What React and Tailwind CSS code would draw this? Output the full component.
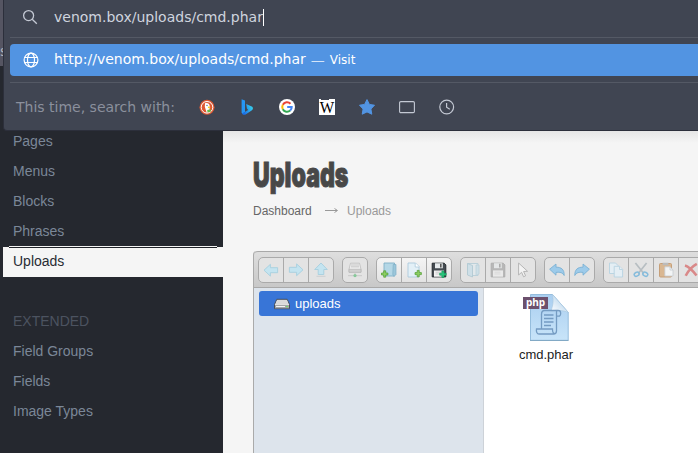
const navItems = ["Pages", "Menus", "Blocks", "Phrases"];
const extendedItems = ["Field Groups", "Fields", "Image Types"];

const Svg = ({ children, className = "h-4 w-4", box = "0 0 16 16" }) => (
  <svg viewBox={box} className={`${className} shrink-0`} fill="none">{children}</svg>
);

/* Address bar icons */
const SearchIcon = () => (
  <Svg><g stroke="#c4c9d4" strokeWidth="1.3"><circle cx="6.6" cy="6.6" r="5" /><path d="M10.2 10.2 14.8 14.8" /></g></Svg>
);
const GlobeIcon = () => (
  <Svg><g stroke="#fff" strokeWidth="1.2"><circle cx="8" cy="8" r="6.9" /><ellipse cx="8" cy="8" rx="3.5" ry="6.9" /><path d="M1.5 5.5h13M1.5 10.5h13" /></g></Svg>
);
const DuckIcon = () => (
  <Svg>
    <circle cx="8" cy="8.3" r="7.5" fill="#de5833" /><circle cx="8" cy="8.3" r="5.8" stroke="#fff" strokeWidth="1" />
    <path d="M6 4.2c3-.7 5 .8 4.7 3.4l-.3 5.2-2.7 1-1.9-6Z" fill="#fff" />
    <path d="M8.6 7.6 12 8l-2.7 1.2Z" fill="#fdd20a" /><path d="m8.2 11 3.6-.7-.3 2.6-3 .3Z" fill="#65bc46" />
    <circle cx="8" cy="6.4" r=".6" fill="#2d4f8e" />
  </Svg>
);
const BingIcon = () => (
  <Svg>
    <defs><linearGradient id="bing" x1="4" y1="12" x2="14" y2="8" gradientUnits="userSpaceOnUse"><stop stopColor="#1b6de8" /><stop offset="1" stopColor="#38d6ee" /></linearGradient></defs>
    <path d="M2.6.2 6 1.6v10.7L3.8 15l-1.2-1.2Z" fill="#2696f4" />
    <path d="m7.2 5 5.5 2.4c1.7.8 1.5 3.2-.1 4.2l-6 3.8c-1.4.7-3.2.2-3.6-1l6.1-3.4-1.2-1.5Z" fill="url(#bing)" />
  </Svg>
);
const GoogleIcon = () => (
  <Svg>
    <circle cx="8" cy="8" r="8" fill="#fff" />
    <g strokeWidth="2"><path d="M11.5 4.7A4.8 4.8 0 0 0 3.8 5.8" stroke="#ea4335" /><path d="M3.8 5.8a4.8 4.8 0 0 0 0 4.4" stroke="#fbbc05" /><path d="M3.8 10.2a4.8 4.8 0 0 0 7.4 1.4" stroke="#34a853" /><path d="M11.2 11.6A4.6 4.6 0 0 0 12.7 8.1H8.2" stroke="#4285f4" /></g>
  </Svg>
);
const WikiIcon = () => (
  <span className="relative flex h-4 w-4 items-center justify-center bg-white font-['Liberation_Serif',serif] text-[17px] leading-none text-black">
    <span className="scale-x-90">W</span><span className="absolute left-0.5 top-0 h-px w-2 bg-[#404552]" />
  </span>
);
const StarIcon = () => (
  <Svg><path d="m8 .6 2.4 4.8 5.1.8-3.6 3.8.9 5.2L8 12.9l-4.8 2.3.9-5.2L.5 6.2l5.1-.8Z" fill="#5294e2" stroke="#5294e2" strokeWidth="1" strokeLinejoin="round" /></Svg>
);
const TabIcon = () => (
  <Svg><rect x=".6" y="2.6" width="14.8" height="11" rx="1.2" stroke="#c4c9d4" strokeWidth="1.1" /></Svg>
);
const ClockIcon = () => (
  <Svg><circle cx="7.7" cy="8" r="6.9" stroke="#c4c9d4" strokeWidth="1.2" /><path d="M7.6 4v4.2l3.2 2" stroke="#c4c9d4" strokeWidth="1.2" /></Svg>
);

/* File manager toolbar icons */
const arrowPath = "M1 8.2 7.4 2.3v3.4H14.6v5H7.4v3.4Z";
const Arrow = ({ turn = "" }) => (
  <Svg className={`h-4 w-4 ${turn}`}><path d={arrowPath} fill="#c4e4f0" stroke="#a6cfdf" strokeWidth=".9" /></Svg>
);
const UpArrow = () => (
  <Svg><path d="M8 1 14.3 7.5H10.8v5H5.2v-5H1.7Z" fill="#c4e4f0" stroke="#a6cfdf" strokeWidth=".9" /><path d="M3.5 14.3h9" stroke="#cbcfd1" /></Svg>
);
const Plus = ({ x, y, color = "#8dcf62", edge = "#4f9c31" }) => (
  <path transform={`translate(${x} ${y})`} d="M2.2 0h2v2.2h2.2v2H4.2v2.2h-2V4.2H0v-2h2.2Z" fill={color} stroke={edge} strokeWidth=".7" />
);
const DriveNet = () => (
  <Svg><path d="M3.5 1.2h9l1.5 6v3H2v-3Z" fill="#ececec" stroke="#bcbcbc" strokeWidth=".8" /><path d="M2 7.3h12v3H2Z" fill="#d0d0d0" stroke="#b4b4b4" strokeWidth=".6" /><path d="M4 3h8M4 4.8h8M1 13.7h14M8 10.5v3" stroke="#c8c8c8" /><circle cx="8" cy="13.6" r="1.6" fill="#87c89a" /></Svg>
);
const FolderShape = () => (
  <><path d="M3 1h10.5v13H3Z" fill="#b4d7e6" stroke="#7fb0c7" strokeWidth=".9" /><path d="M12.2 2.5H15v10l-2 2-1.2-2Z" fill="#9bc6da" stroke="#7fb0c7" strokeWidth=".7" /></>
);
const NewFolder = () => <Svg><FolderShape /><Plus x={0.5} y={8.8} /></Svg>;
const NewFile = () => (
  <Svg><path d="M2 1h7.5L13 4.5V15H2Z" fill="#e3f0f7" stroke="#accadc" strokeWidth=".9" /><path d="M9.2 1v4h4" fill="#fff" stroke="#accadc" strokeWidth=".8" /><Plus x={9} y={8.4} /></Svg>
);
const Floppy = ({ upload }) => (
  <Svg className={upload ? "h-4 w-4" : "h-4 w-4 opacity-40"}>
    <path d="M1.2 1.2h12l1.6 1.7v12H1.2Z" fill={upload ? "#454b51" : "#777"} stroke={upload ? "#252a2f" : "#606060"} />
    <path d="M4 1.2h7.8v5H4Z" fill="#e7ebed" /><path d="M9 1.8h1.6v3.6H9Z" fill="#555" />
    <path d="M3 8.4h10v6.3H3Z" fill="#f3f3f3" /><path d="M4.5 10.2h6M4.5 12h6" stroke="#bbb" strokeWidth=".7" />
    {upload && <Plus x={8.7} y={9} color="#28c77d" edge="#139858" />}
  </Svg>
);
const OpenFolder = () => (
  <Svg className="h-4 w-4 opacity-50"><path d="M2.5 1.5H13v12H7.5" fill="#e1eef4" stroke="#93bdcf" /><path d="M11 3h3v9l-3 1.5Z" fill="#b9dceb" stroke="#93bdcf" strokeWidth=".8" /><path d="m2.5 1.5 5 2V15l-5-2Z" fill="#b9dceb" stroke="#79a9be" strokeWidth=".8" /></Svg>
);
const Cursor = () => (
  <Svg><path d="M3.6 1v12l3-2.7 2 4.5 2-1-2-4.3 4-.2Z" fill="#f3f3f3" stroke="#b5b5b5" /></Svg>
);
const Bend = ({ turn = "" }) => (
  <Svg className={`h-4 w-4 ${turn}`}><path d="M.6 7.2 7 2v3.2c5.3-.2 8.4 2.3 8.2 8.3-1.6-3-4-3.6-8.2-3.1v2.8Z" fill="#9dcbea" stroke="#75add2" strokeWidth=".8" /></Svg>
);
const Copy = () => (
  <Svg><g fill="#e4eef4" stroke="#b7d3e1" strokeWidth=".9"><path d="M1.5 1h6L10 3.5v8H1.5Z" /><path d="M6.2 4.3h5.4l3 3V15H6.2Z" /><path d="M11.5 4.5v3h3" /></g></Svg>
);
const Cut = () => (
  <Svg><path d="m2.4 1 8.4 10.5M13.6 1 5.2 11.5" stroke="#b7bec2" strokeWidth="1.7" /><g stroke="#86bcdc" strokeWidth="1.5"><ellipse cx="3.7" cy="12.2" rx="2.6" ry="1.9" transform="rotate(-25 3.7 12.2)" /><ellipse cx="12.3" cy="12.2" rx="2.6" ry="1.9" transform="rotate(25 12.3 12.2)" /></g></Svg>
);
const Paste = () => (
  <Svg><rect x="1.5" y="1.5" width="12" height="13.5" rx="1" fill="#d9b792" stroke="#c69f78" /><path d="M4.6.8h5.8v2.4H4.6Z" fill="#bbb" /><path d="M6.8 4.8H12L15 8v6H6.8Z" fill="#f2f4f5" stroke="#c5ccd0" strokeWidth=".8" /><path d="M12 4.8V8h3" stroke="#c5ccd0" strokeWidth=".8" /></Svg>
);
const Remove = () => (
  <Svg><path d="M2 3.5C5 4.4 10 9 13.5 13.5M13.8 1.8C9.5 4.2 5 9 2.7 13.8" stroke="#d98989" strokeWidth="2.6" /></Svg>
);

const groups = [
  [<Arrow />, <Arrow turn="rotate-180" />, <UpArrow />],
  [<DriveNet />],
  [<NewFolder />, <NewFile />, <Floppy upload />],
  [<OpenFolder />, <Floppy />, <Cursor />],
  [<Bend />, <Bend turn="-scale-x-100" />],
  [<Copy />, <Cut />, <Paste />, <Remove />, null],
];
const activeGroup = 2;

function Toolbar() {
  return (
    <div className="flex h-[37px] gap-2 overflow-hidden rounded-tl-sm border-y border-[#a9a9a9] bg-gradient-to-b from-[#dedede] to-[#c8c8c8] pl-1 pt-[5px]">
      {groups.map((group, g) => (
        <div key={g} className={`flex h-[26px] shrink-0 divide-x divide-[#aaa] overflow-hidden rounded-[5px] border border-[#aaa] ${g === activeGroup ? "bg-gradient-to-b from-[#f4f4f4] to-[#e3e3e3]" : "bg-[#e3e3e3]"}`}>
          {group.map((icon, i) => (
            <div key={i} className={`flex h-6 items-center justify-center ${i === group.length - 1 ? "w-6" : "w-[25px]"}`}>{icon}</div>
          ))}
        </div>
      ))}
    </div>
  );
}

const DriveIcon = () => (
  <Svg className="h-3 w-4" box="0 0 16 12">
    <path d="M2.8 1.3h10.4l2.3 5.2v4.2H.5V6.5Z" fill="#e4e4e4" stroke="#3f444d" strokeWidth=".9" /><path d="M3.3 2h9.4l1.7 4.4H1.6Z" fill="#dadada" /><path d="M1 7h14v3.2H1Z" fill="#a3a6a8" /><path d="M2 8.5h9" stroke="#f4f4f4" /><path d="M12 8.6h2" stroke="#72dc65" />
  </Svg>
);

function PhpFile() {
  return (
    <div className="relative h-12 w-12">
      <Svg className="h-12 w-12" box="0 0 48 48">
        <defs><linearGradient id="paper" x2="0" y2="1"><stop stopColor="#a9cef0" /><stop offset="1" stopColor="#c8e4f9" /></linearGradient><linearGradient id="fold" x1="0" y1="1" x2="1" y2="0"><stop stopColor="#fff" /><stop offset="1" stopColor="#a2c8e7" /></linearGradient></defs>
        <path d="M8.5 1.5h22l15.7 17.8V47.3H8.5Z" fill="url(#paper)" stroke="#95bddd" />
        <path d="M8 47.5h38.5" stroke="#82a9c5" /><path d="M30.5 1.5c1.4 7 .3 11.3-1.5 16.8 7-2 12-.6 17.2 1Z" fill="url(#fold)" stroke="#a9c8de" strokeWidth=".6" />
        <g stroke="#749bc2" strokeWidth="1.3"><path d="M19.5 36V21.5c0-3 1-4 3-4h14c2.8 0 3 5.7 0 5.7h-2V38c0 2.5-1 3-3 3H17c-2 0-3-2.5-2.5-5h16c0 2.6.5 4.5 2 4.5M34.5 23V19c0-1.4 1-1.7 2-1.5" /><path d="M22 22h9.5M22 25.5h9.5M22 29h9.5M22 32.5h7" /></g>
      </Svg>
      <span className="absolute left-px top-1 flex h-3 w-[25px] items-center justify-center bg-[#6c506d] pb-0.5 font-['Open_Sans',sans-serif] text-[10px] font-bold leading-none text-white">php</span>
    </div>
  );
}

function Sidebar() {
  return (
    <aside className="flex h-full w-[223px] shrink-0 flex-col bg-[#25282f] pl-[3px] pt-[126px] text-sm text-[#7b8798]">
      {navItems.map((item) => <div key={item} className="flex h-[30px] items-center pl-2.5">{item}</div>)}
      <div className="relative mt-px flex h-[30px] items-center bg-[#f5f5f5] pb-0.5 pl-2.5 text-[#282c33]">
        Uploads
        <span className="absolute -top-px left-1.5 h-0.5 w-52 border-b border-[#1f2228] bg-[#f5f5f5]" />
      </div>
      <div className="mt-[29px] flex h-[30px] items-center pl-2.5 text-[#4c5360]">EXTENDED</div>
      {extendedItems.map((item) => <div key={item} className="flex h-[30px] items-center pl-2.5">{item}</div>)}
    </aside>
  );
}

function AddressPanel() {
  return (
    <div className="absolute left-0 top-0 h-[131px] w-full overflow-hidden font-['DejaVu_Sans',sans-serif]">
      <div className="h-[66px] w-[5px] bg-[#555562] pt-[43px] text-sm leading-4 text-[#b2b4bc]">s</div>
      <div className="absolute left-[3px] top-0 h-[131px] w-[695px] rounded-bl border-b border-l border-[#2c2f3b] bg-[#404552] pl-1.5">
        <div className="flex h-[37px] items-center gap-4 pb-[3px] pl-3 text-sm text-[#cfd4df]">
          <SearchIcon /><span className="flex items-center">venom.box/uploads/cmd.phar<i className="h-[17px] w-px bg-white" /></span>
        </div>
        <div className="h-px bg-[#545965]" />
        <div className="mt-1.5 flex h-8 items-center rounded-l bg-[#5294e2] pl-[13px] text-sm text-white">
          <GlobeIcon /><span className="ml-[15px] pb-0.5">http://venom.box/uploads/cmd.phar</span><span className="mx-[5px] pb-px text-sm text-[#d4e4f8]">—</span><span className="pb-px text-xs">Visit</span>
        </div>
        <div className="mt-1.5 h-px bg-[#545965]" />
        <div className="flex h-12 items-center pl-1.5 text-sm text-[#8b909d]">
          <span className="w-[183px]">This time, search with:</span>
          <div className="flex gap-6"><DuckIcon /><BingIcon /><GoogleIcon /><WikiIcon /><StarIcon /><TabIcon /><ClockIcon /></div>
        </div>
      </div>
    </div>
  );
}

export default function App() {
  return (
    <div className="relative flex h-[453px] w-[698px] overflow-hidden bg-[#f5f5f5] font-['Liberation_Sans',Arial,sans-serif]">
      <Sidebar />
      <main className="flex min-w-0 flex-1 flex-col pl-[30px] pt-[131px]">
        <header className="h-[120px] shrink-0 pt-6">
          <h1 className="h-10 w-max origin-left scale-x-[0.68] font-['Inter',sans-serif] text-[34px] font-black leading-10 text-[#484848] [-webkit-text-stroke:1px_#484848]">Uploads</h1>
          <div className="mt-1.5 flex h-5 items-center text-xs text-[#666]">
            <span className="w-[72px]">Dashboard</span>
            <Svg className="h-3 w-3.5" box="0 0 14 12"><path d="M0 5.5h12M9.5 3.5 12.5 5.5 9.5 7.5" stroke="#999" /></Svg>
            <span className="ml-2 text-[#999]">Uploads</span>
          </div>
        </header>
        <section className="flex min-h-0 flex-1 flex-col rounded-tl border-l border-[#aaa]">
          <Toolbar />
          <div className="flex min-h-0 flex-1">
            <div className="w-[230px] shrink-0 border-r border-[#cdd2d8] bg-[#dde4ec] pl-[5px] pr-[5px] pt-[3px]">
              <div className="flex h-[25px] items-center gap-[5px] rounded-[3px] bg-[#3875d7] pl-[15px] text-[13px] text-white"><DriveIcon />uploads</div>
            </div>
            <div className="flex-1 bg-white pl-[37px] pt-[5px]">
              <div className="flex w-[50px] flex-col items-center text-[13px] text-[#222]">
                <PhpFile /><span className="mt-1 whitespace-nowrap">cmd.phar</span>
              </div>
            </div>
          </div>
        </section>
      </main>
      <div className="absolute left-[223px] top-[131px] h-3 w-[475px] bg-gradient-to-b from-[#e6e6e6] to-[#f5f5f5]" />
      <AddressPanel />
    </div>
  );
}
